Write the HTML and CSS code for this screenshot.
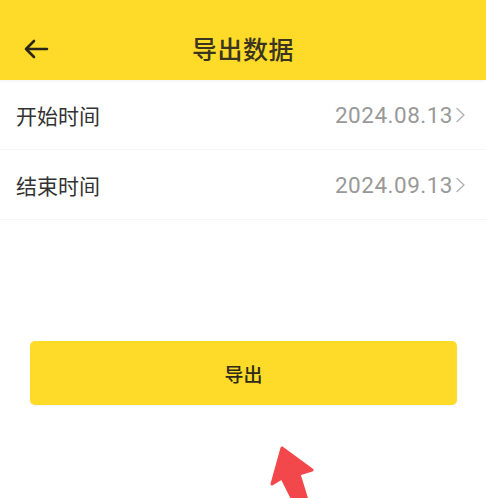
FILE: index.html
```html
<!DOCTYPE html>
<html lang="zh">
<head>
<meta charset="utf-8">
<title>导出数据</title>
<link rel="stylesheet" href="styles.css">
</head>
<body>
<div class="page">
  <header class="topbar">
    <span class="back">
      <svg width="26" height="20" viewBox="0 0 26 20"><path d="M24 10H3M11 2L3 10l8 8" fill="none" stroke="#2b2718" stroke-width="2.6" stroke-linecap="round" stroke-linejoin="round"/></svg>
    </span>
    <h1 class="title">导出数据</h1>
  </header>
  <div class="list">
    <div class="row">
      <span class="label">开始时间</span>
      <span class="value">2024.08.13<span class="chev"><svg width="11" height="16" viewBox="0 0 11 16"><path d="M2 1.5l7 6.5-7 6.5" fill="none" stroke="#b3b3b3" stroke-width="1.4" stroke-linecap="round" stroke-linejoin="round"/></svg></span></span>
    </div>
    <div class="row">
      <span class="label">结束时间</span>
      <span class="value">2024.09.13<span class="chev"><svg width="11" height="16" viewBox="0 0 11 16"><path d="M2 1.5l7 6.5-7 6.5" fill="none" stroke="#b3b3b3" stroke-width="1.4" stroke-linecap="round" stroke-linejoin="round"/></svg></span></span>
    </div>
  </div>
  <div class="actions">
    <button class="btn">导出</button>
  </div>
  <svg class="annot" width="486" height="498" viewBox="0 0 486 498">
    <path d="M282 448 L312 470 L299 474 L307 500 L293 500 L282 478 L272 484 Z" fill="#f2474b" stroke="#f2474b" stroke-width="3" stroke-linejoin="round"/>
  </svg>
</div>
</body>
</html>
```

FILE: styles.css
```css
html, body {
  margin: 0;
  padding: 0;
  background: #ffffff;
}
body {
  font-family: "Noto Sans CJK SC", "Noto Sans", sans-serif;
  color: #333333;
}
.page {
  position: relative;
  width: 486px;
  height: 498px;
  overflow: hidden;
}
.topbar {
  height: 80px;
  background: #fddb28;
  display: flex;
  align-items: center;
  justify-content: center;
  position: relative;
  box-shadow: 0 1px 3px rgba(0,0,0,0.06);
}
.back {
  position: absolute;
  left: 23px;
  top: 39px;
  display: flex;
}
.title {
  margin: 0;
  margin-top: 16px;
  font-size: 25px;
  font-weight: 500;
  color: #3a3420;
  letter-spacing: 0.5px;
}
.list {
  display: flex;
  flex-direction: column;
}
.row {
  height: 69px;
  display: flex;
  align-items: center;
  justify-content: space-between;
  padding: 0 20px 0 16px;
  border-bottom: 1px solid #f6f6f6;
}
.label {
  font-size: 21px;
  color: #333333;
}
.value {
  display: flex;
  align-items: center;
  font-family: Roboto, "Noto Sans", sans-serif;
  font-size: 22.5px;
  color: #999999;
  letter-spacing: 0.5px;
}
.chev {
  display: flex;
  margin-left: 2px;
}
.actions {
  padding: 121px 29px 0 30px;
}
.btn {
  width: 100%;
  height: 64px;
  border: none;
  border-radius: 5px;
  background: #fddb28;
  font-family: "Noto Sans CJK SC", sans-serif;
  font-size: 19px;
  font-weight: 500;
  color: #2d2a1c;
  box-shadow: 0 1px 2px rgba(0,0,0,0.05);
}
.annot {
  position: absolute;
  left: 0;
  top: 0;
  pointer-events: none;
}
```
